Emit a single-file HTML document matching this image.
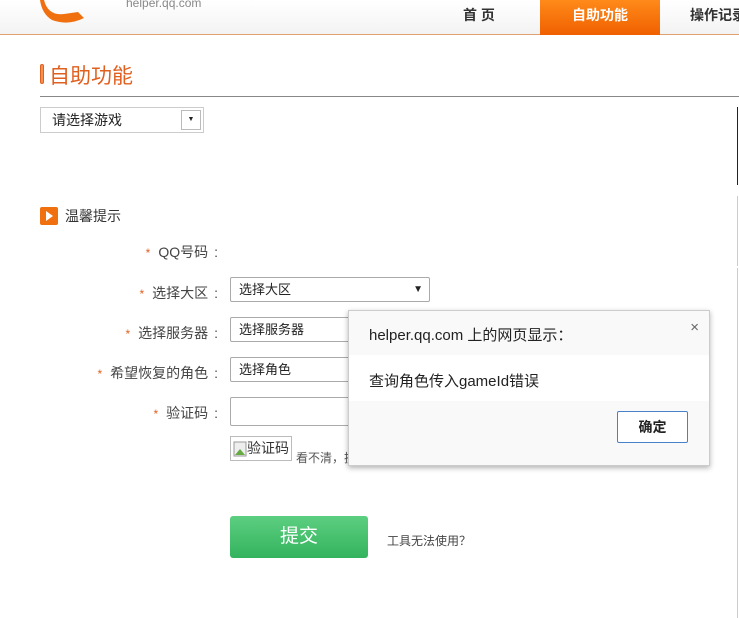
<!DOCTYPE html>
<html><head><meta charset="utf-8">
<style>
*{margin:0;padding:0;box-sizing:border-box}
body{width:739px;height:616px;background:#fff;font-family:"Liberation Sans","Noto Sans CJK SC",sans-serif;position:relative;overflow:hidden;color:#333}
.abs{position:absolute}
.hdr{left:0;top:0;width:739px;height:35px;background:linear-gradient(#fff,#f3f3f3);border-bottom:1px solid #e0a070}
.nav{top:0;height:35px;line-height:30px;font-size:14px;font-weight:bold;color:#333}
.sel{border:1px solid #aaa;border-radius:2px;height:25px;font-size:13px;line-height:23px;padding-left:8px;color:#222;background:#fff}
.lbl{font-size:14px;color:#444;text-align:right;width:196px;left:22px}
.lbl b{color:#e06020;font-weight:normal;font-size:12px;margin-right:8px}
.lbl i{font-style:normal;margin-left:6px}
</style></head><body>
<div class="abs hdr"></div>
<svg class="abs" style="left:34px;top:0" width="60" height="24"><path d="M10 0 Q14 16 30 14 L44 12 L50 18 Q34 26 18 20 Q8 14 6 0Z" fill="#f07010"/></svg>
<div class="abs" style="left:126px;top:-4px;font-size:12px;color:#888">helper.qq.com</div>
<div class="abs nav" style="left:463px">首 页</div>
<div class="abs nav" style="left:540px;width:120px;background:linear-gradient(#ff8a1a,#f06000);color:#fff;text-align:center">自助功能</div>
<div class="abs nav" style="left:690px;width:60px;white-space:nowrap">操作记录</div>
<div class="abs" style="left:40px;top:64px;width:4px;height:20px;border:1px solid #e06020;border-radius:2px;background:#f89050"></div>
<div class="abs" style="left:49px;top:60px;font-size:21px;color:#e06020">自助功能</div>
<div class="abs" style="left:40px;top:96px;width:699px;height:1px;background:#888"></div>
<div class="abs" style="left:737px;top:107px;width:1px;height:78px;background:#222"></div>
<div class="abs" style="left:737px;top:196px;width:1px;height:70px;background:#ccc"></div>
<div class="abs" style="left:737px;top:268px;width:1px;height:350px;background:#ccc"></div>
<div class="abs sel" style="left:40px;top:107px;width:164px;height:26px;border-color:#ccc;border-radius:0;padding-left:11px;line-height:25px;font-size:14px">请选择游戏<div class="abs" style="right:2px;top:2px;width:20px;height:20px;border:1px solid #bbb;font-size:7px;text-align:center;line-height:18px">▼</div></div>
<div class="abs" style="left:40px;top:207px;width:18px;height:18px;background:#f07010;border-radius:2px"><svg width="18" height="18"><path d="M6 4L13 9L6 14Z" fill="#fff"/></svg></div>
<div class="abs" style="left:65px;top:206px;font-size:14px;color:#333">温馨提示</div>
<div class="abs lbl" style="top:242px"><b>*</b>QQ号码<i>:</i></div>
<div class="abs lbl" style="top:283px"><b>*</b>选择大区<i>:</i></div>
<div class="abs lbl" style="top:323px"><b>*</b>选择服务器<i>:</i></div>
<div class="abs lbl" style="top:363px"><b>*</b>希望恢复的角色<i>:</i></div>
<div class="abs lbl" style="top:403px"><b>*</b>验证码<i>:</i></div>
<div class="abs sel" style="left:230px;top:277px;width:200px">选择大区<span class="abs" style="right:6px;top:0;font-size:10px">▼</span></div>
<div class="abs sel" style="left:230px;top:317px;width:200px">选择服务器</div>
<div class="abs sel" style="left:230px;top:357px;width:200px">选择角色</div>
<div class="abs sel" style="left:230px;top:397px;width:200px;height:29px"></div>
<div class="abs" style="left:230px;top:436px;width:62px;height:25px;border:1px solid #bbb;font-size:14px;line-height:23px;padding-left:16px;color:#333"><svg class="abs" style="left:2px;top:4px" width="14" height="16"><rect x="1" y="1" width="12" height="14" fill="#eee" stroke="#999"/><path d="M2 14 L7 8 L12 14Z" fill="#6a4"/></svg>验证码</div>
<div class="abs" style="left:296px;top:449px;font-size:12px;color:#555">看不清，换</div>
<div class="abs" style="left:230px;top:516px;width:138px;height:42px;background:linear-gradient(#5ccf80,#34b35e);border-radius:3px;color:#fff;font-size:19px;text-align:center;line-height:42px">提交</div>
<div class="abs" style="left:387px;top:532px;font-size:12px;color:#444">工具无法使用？</div>
<div class="abs" style="left:348px;top:310px;width:362px;height:156px;background:#fff;border:1px solid #ccc;box-shadow:0 2px 5px rgba(0,0,0,.3)">
 <div class="abs" style="left:0;top:0;width:360px;height:44px;background:#f9f9f9"></div>
 <div class="abs" style="left:20px;top:13px;font-size:15px;color:#222">helper.qq.com 上的网页显示：</div>
 <div class="abs" style="right:10px;top:8px;font-size:15px;color:#666">×</div>
 <div class="abs" style="left:20px;top:59px;font-size:15px;color:#222">查询角色传入gameId错误</div>
 <div class="abs" style="left:0;top:90px;width:360px;height:64px;background:#f9f9f9"></div>
 <div class="abs" style="left:268px;top:100px;width:71px;height:32px;border:1px solid #4a80c8;border-radius:2px;background:#fff;font-size:14px;font-weight:bold;text-align:center;line-height:30px;color:#222">确定</div>
</div>
</body></html>
